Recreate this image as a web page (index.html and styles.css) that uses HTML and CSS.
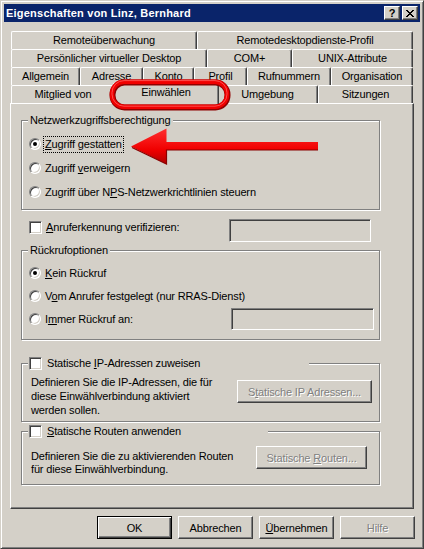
FILE: index.html
```html
<!DOCTYPE html>
<html lang="de">
<head>
<meta charset="utf-8">
<title>Eigenschaften von Linz, Bernhard</title>
<link rel="stylesheet" href="styles.css">
</head>
<body>
<div class="window">
  <div class="titlebar">
    <span class="title">Eigenschaften von Linz, Bernhard</span>
    <span class="capbtn help">?</span>
    <span class="capbtn close"><svg width="8" height="7" viewBox="0 0 8 7"><path d="M0 0h2v1H0zM6 0h2v1H6zM1 1h2v1H1zM5 1h2v1H5zM2 2h4v1H2zM3 3h2v1H3zM2 4h4v1H2zM1 5h2v1H1zM5 5h2v1H5zM0 6h2v1H0zM6 6h2v1H6z" fill="#000"/></svg></span>
  </div>
  <div class="client">
    <div class="tabs">
      <div class="tabrow">
        <span class="tab t186">Remoteüberwachung</span>
        <span class="tab t216">Remotedesktopdienste-Profil</span>
      </div>
      <div class="tabrow">
        <span class="tab t196">Persönlicher virtueller Desktop</span>
        <span class="tab t85">COM+</span>
        <span class="tab t121">UNIX-Attribute</span>
      </div>
      <div class="tabrow">
        <span class="tab t69">Allgemein</span>
        <span class="tab t63">Adresse</span>
        <span class="tab t51">Konto</span>
        <span class="tab t53">Profil</span>
        <span class="tab t84">Rufnummern</span>
        <span class="tab t82">Organisation</span>
      </div>
      <div class="tabrow">
        <span class="tab t104">Mitglied von</span>
        <span class="tab t102 selected">Einwählen</span>
        <span class="tab t101">Umgebung</span>
        <span class="tab t95">Sitzungen</span>
      </div>
    </div>
    <div class="panel">
      <div class="group g1">
        <div class="legend">Netzwerkzugriffsberechtigung</div>
        <div class="options">
          <div class="opt"><span class="radio checked"></span><span class="lbl focus"><u>Z</u>ugriff gestatten</span></div>
          <div class="opt"><span class="radio"></span><span class="lbl">Zugriff <u>v</u>erweigern</span></div>
          <div class="opt"><span class="radio"></span><span class="lbl">Zugriff über N<u>P</u>S-Netzwerkrichtlinien steuern</span></div>
        </div>
      </div>
      <div class="checkrow">
        <span class="check"></span><span class="lbl"><u>A</u>nruferkennung verifizieren:</span>
        <span class="edit e1"></span>
      </div>
      <div class="group g2">
        <div class="legend">Rückrufoptionen</div>
        <div class="options2">
          <div class="opt2"><span class="radio checked"></span><span class="lbl"><u>K</u>ein Rückruf</span></div>
          <div class="opt2"><span class="radio"></span><span class="lbl">V<u>o</u>m Anrufer festgelegt (nur RRAS-Dienst)</span></div>
          <div class="opt2"><span class="radio"></span><span class="lbl">I<u>m</u>mer Rückruf an:</span><span class="edit e2"></span></div>
        </div>
      </div>
      <div class="group g3">
        <div class="legend cblegend l3"><span class="check"></span><span class="lbl">Statische <u>I</u>P-Adressen zuweisen</span></div>
        <div class="gbody b3">
          <p class="desc">Definieren Sie die IP-Adressen, die für<br>diese Einwählverbindung aktiviert<br>werden sollen.</p>
          <span class="btn disabled w135"><span>S<u>t</u>atische IP Adressen...</span></span>
        </div>
      </div>
      <div class="group g4">
        <div class="legend cblegend l4"><span class="check"></span><span class="lbl"><u>S</u>tatische Routen anwenden</span></div>
        <div class="gbody b4">
          <p class="desc d4">Definieren Sie die zu aktivierenden Routen<br>für diese Einwählverbindung.</p>
          <span class="btn disabled w111"><span>Statische <u>R</u>outen...</span></span>
        </div>
      </div>
    </div>
    <div class="buttons">
      <span class="btn default">OK</span>
      <span class="btn">Abbrechen</span>
      <span class="btn"><span><u>Ü</u>bernehmen</span></span>
      <span class="btn disabled">Hilfe</span>
    </div>
  </div>
  <svg class="annot" width="424" height="549" viewBox="0 0 424 549">
    <defs>
      <linearGradient id="ag" x1="0" y1="0" x2="0" y2="1">
        <stop offset="0" stop-color="#ff3030"/>
        <stop offset="0.6" stop-color="#f00000"/>
        <stop offset="1" stop-color="#b00000"/>
      </linearGradient>
    </defs>
    <rect x="111.5" y="81.5" width="115" height="25" rx="12" ry="12" fill="none" stroke="#900000" stroke-width="6"/>
    <rect x="111" y="80.8" width="115" height="25" rx="12" ry="12" fill="none" stroke="#f00000" stroke-width="4.4"/>
    <rect x="111" y="79.6" width="115" height="25.6" rx="12" ry="12" fill="none" stroke="#ff7070" stroke-width="1" opacity="0.7"/>
    <polygon points="130,145.5 165.5,127.5 165.5,141 317,141 317,149 165.5,149 165.5,163" fill="url(#ag)"/>
    <polyline points="131,146.5 165.5,163 165.5,149 317,149" fill="none" stroke="#8a0000" stroke-width="1.2"/>
  </svg>
</div>
</body>
</html>
```

FILE: styles.css
```css
* { box-sizing: border-box; }
html, body { margin: 0; padding: 0; }
body {
  background: #d4d0c8;
  font-family: "Liberation Sans", Arial, sans-serif;
  font-size: 11px;
  letter-spacing: -0.15px;
  color: #000;
}
u { text-decoration: underline; text-underline-offset: 1px; }

.window {
  position: relative;
  width: 424px;
  height: 549px;
  background: #d4d0c8;
  border: 1px solid;
  border-color: #d4d0c8 #404040 #404040 #d4d0c8;
  box-shadow: inset 1px 1px #fff, inset -1px -1px #808080;
  padding: 3px;
}

.titlebar {
  height: 18px;
  background: #0a246a;
  display: flex;
  align-items: flex-start;
  padding-left: 2px;
}
.title {
  flex: 1;
  color: #fff;
  font-weight: bold;
  letter-spacing: 0.22px;
  line-height: 18px;
}
.capbtn {
  width: 16px;
  height: 14px;
  margin-top: 2px;
  background: #d4d0c8;
  border: 1px solid;
  border-color: #fff #404040 #404040 #fff;
  box-shadow: inset -1px -1px #808080;
  display: flex;
  align-items: center;
  justify-content: center;
}
.help {
  font-weight: bold;
  font-size: 11px;
  line-height: 12px;
  letter-spacing: 0;
  padding-bottom: 1px;
}
.close { margin-left: 2px; margin-right: 2px; padding-right: 1px; }
.close svg { display: block; }

.client { padding-top: 1px; }

.tabs { margin: 8px 0 0 7px; width: 402px; }
.tabrow { display: flex; height: 18px; }
.tab {
  flex: none;
  height: 18px;
  border-top: 1px solid #fff;
  border-left: 1px solid #fff;
  border-right: 1px solid #404040;
  border-radius: 2px 2px 0 0;
  box-shadow: inset -1px 0 #808080;
  background: #d4d0c8;
  text-align: center;
  line-height: 16px;
  white-space: nowrap;
}
.tab.selected {
  position: relative;
  z-index: 2;
  height: 21px;
  margin: -2px -2px 0 -2px;
  line-height: 17px;
}
.t186 { width: 186px; } .t216 { width: 216px; }
.t196 { width: 196px; } .t85 { width: 85px; } .t121 { width: 121px; }
.t69 { width: 69px; } .t63 { width: 63px; } .t51 { width: 51px; }
.t53 { width: 53px; } .t84 { width: 84px; } .t82 { width: 82px; }
.t104 { width: 104px; } .t102 { width: 106px; } .t101 { width: 101px; } .t95 { width: 95px; }

.panel {
  position: relative;
  z-index: 1;
  margin-left: 6px;
  width: 404px;
  height: 406px;
  border: 1px solid;
  border-color: #fff #404040 #404040 #fff;
  box-shadow: inset -1px -1px #808080;
  padding: 0 0 0 10px;
}

.group {
  width: 359px;
  border: 1px solid #808080;
  box-shadow: inset 1px 1px #fff, 1px 1px #fff;
}
.legend {
  display: table;
  height: 13px;
  line-height: 13px;
  margin: -7px 0 0 6px;
  padding: 0 2px;
  background: #d4d0c8;
}
.g1 { margin-top: 16px; padding-bottom: 5px; }
.options { margin-top: 5px; }
.opt {
  display: flex;
  align-items: center;
  height: 24px;
  padding-left: 7px;
}
.radio {
  flex: none;
  position: relative;
  width: 12px;
  height: 12px;
  border-radius: 50%;
  background: #fff;
  border: 1px solid;
  border-color: #808080 #fff #fff #808080;
  box-shadow: inset 1px 1px #404040, inset -1px -1px #d4d0c8;
}
.radio.checked::after {
  content: "";
  position: absolute;
  left: 3px;
  top: 3px;
  width: 4px;
  height: 4px;
  border-radius: 50%;
  background: #000;
}
.opt .lbl, .opt2 .lbl { margin-left: 4px; line-height: 13px; }
.focus { outline: 1px dotted #000; outline-offset: 1px; }

.check {
  flex: none;
  width: 13px;
  height: 13px;
  background: #fff;
  border: 1px solid;
  border-color: #808080 #fff #fff #808080;
  box-shadow: inset 1px 1px #404040, inset -1px -1px #d4d0c8;
}

.checkrow {
  display: flex;
  align-items: flex-start;
  height: 23px;
  margin-top: 9px;
  padding-left: 8px;
  width: 359px;
}
.checkrow .check { margin-top: 2px; }
.checkrow .lbl { margin: 2px 0 0 4px; line-height: 13px; }

.edit {
  flex: none;
  height: 23px;
  background: #d4d0c8;
  border: 1px solid;
  border-color: #808080 #fff #fff #808080;
  box-shadow: inset 1px 1px #404040, inset -1px -1px #d4d0c8;
}
.e1 { width: 142px; margin-left: auto; margin-right: 9px; }
.e2 { width: 143px; height: 22px; margin-left: auto; margin-right: 5px; }

.g2 { margin-top: 8px; padding-bottom: 9px; }
.options2 { margin-top: 5px; display: flex; flex-direction: column; gap: 1px; }
.opt2 {
  display: flex;
  align-items: center;
  height: 22px;
  padding-left: 7px;
}

.cblegend {
  display: flex;
  align-items: center;
  padding: 0 0 0 1px;
}
.cblegend .lbl { margin-left: 5px; line-height: 13px; }
.l3 { width: 281px; }
.l4 { width: 240px; }

.g3 { margin-top: 23px; padding-bottom: 4px; }
.g4 { margin-top: 9px; padding-bottom: 8px; }
.gbody {
  display: flex;
  align-items: flex-start;
  padding-left: 9px;
}
.b3 { margin-top: 5px; }
.b4 { margin-top: 8px; }
.desc { margin: 0; line-height: 14px; }
.d4 { margin-top: 4px; line-height: 13px; }

.btn {
  flex: none;
  display: flex;
  align-items: center;
  justify-content: center;
  width: 75px;
  height: 23px;
  background: #d4d0c8;
  border: 1px solid;
  border-color: #fff #404040 #404040 #fff;
  box-shadow: inset -1px -1px #808080;
  white-space: nowrap;
}
.btn.default {
  border-color: #000;
  box-shadow: inset 1px 1px #fff, inset -1px -1px #404040, inset -2px -2px #808080;
}
.btn.disabled { color: #808080; text-shadow: 1px 1px #fff; }
.gbody .btn { margin-left: auto; }
.b3 .btn { margin-top: 5px; margin-right: 7px; }
.b4 .btn { margin-right: 12px; }
.w135 { width: 135px; }
.w111 { width: 111px; }

.buttons {
  display: flex;
  justify-content: flex-end;
  gap: 6px;
  margin-top: 7px;
  padding-right: 5px;
}

.annot {
  position: absolute;
  left: 0;
  top: 0;
  pointer-events: none;
  z-index: 5;
}
```
